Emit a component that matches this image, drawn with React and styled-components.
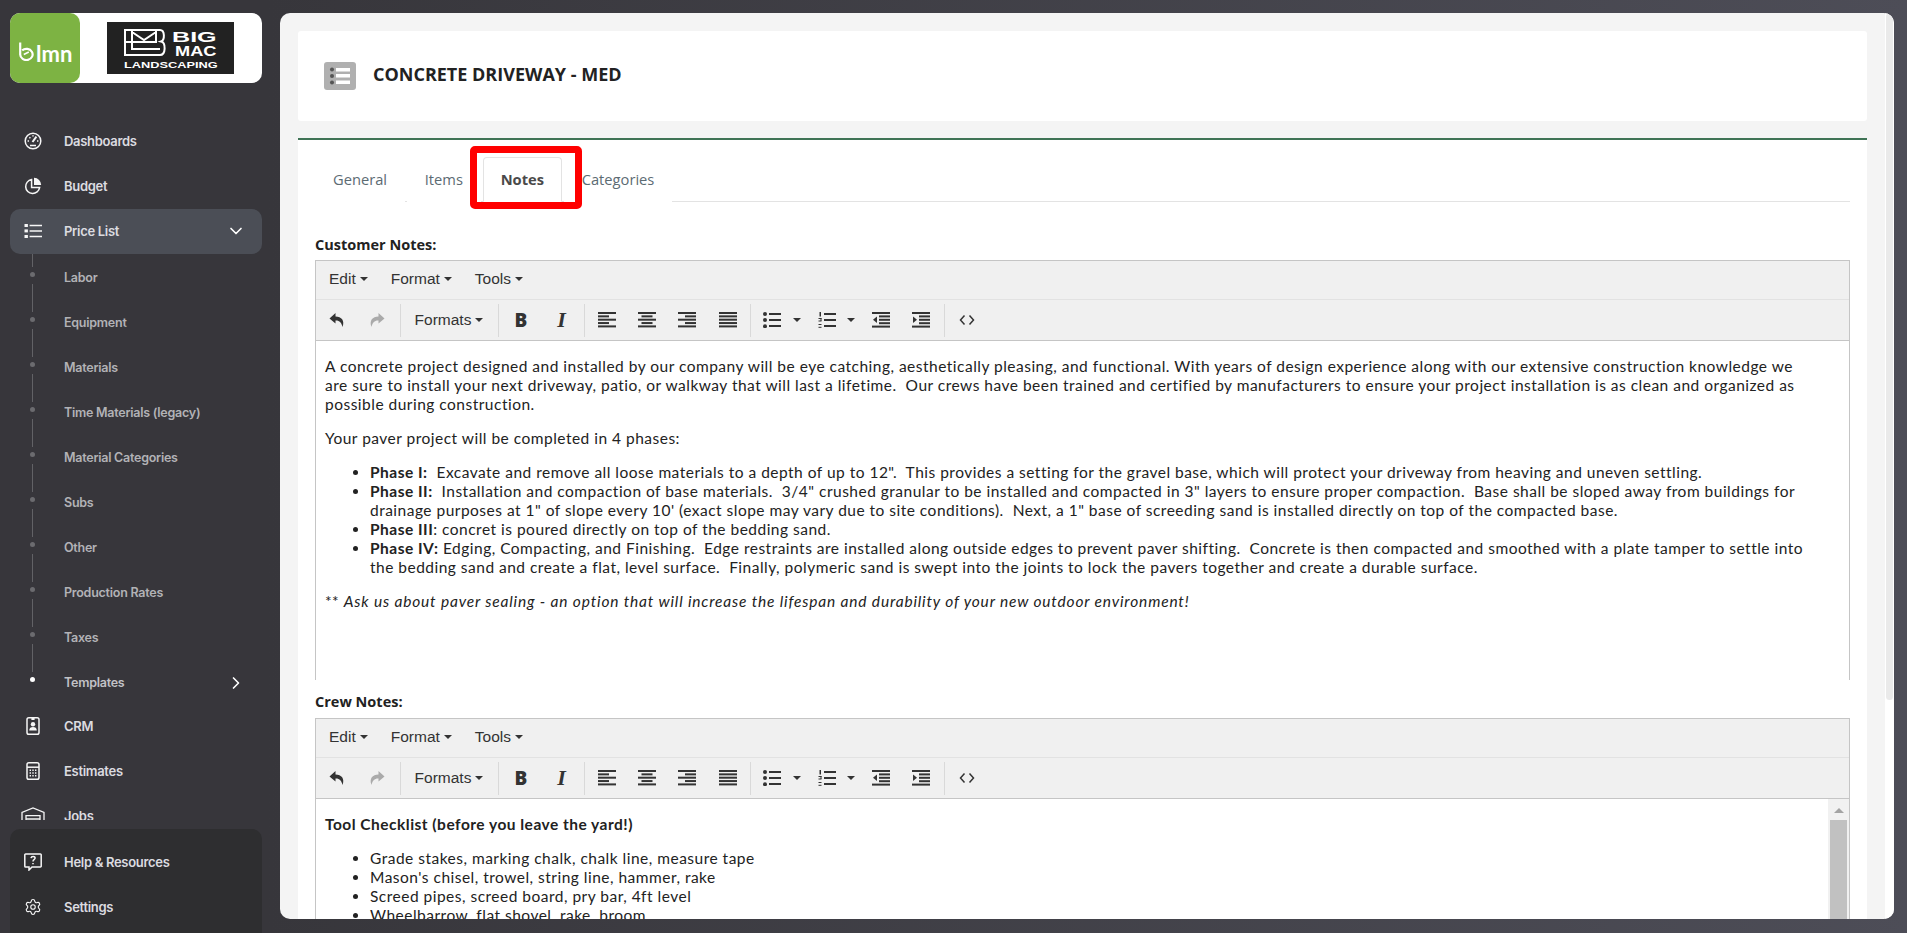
import React from 'react';
import styled, {createGlobalStyle} from 'styled-components';
import {ChevronDown, ChevronRight, Settings as SettingsIcon} from 'lucide-react';

const GlobalStyle = createGlobalStyle`
	html, body {
		margin: 0;
		padding: 0;
		height: 100%;
		overflow: hidden;
		font-family: 'Open Sans', sans-serif;
	}
	* { box-sizing: border-box; }
`

const Shell = styled.div`
	display: flex;
	height: 100vh;
	background: linear-gradient(to right, #37363b 0%, #37363b 14%, #4d4d57 100%);
`

/* sidebar */
const Sidebar = styled.aside`
	width: 280px;
	flex: none;
	display: flex;
	flex-direction: column;
	padding: 13px 18px 0 10px;
	font-family: 'Inter', sans-serif;
`
const LogoBox = styled.div`
	flex: none;
	height: 70px;
	background: #fff;
	border-radius: 10px;
	display: flex;
	align-items: center;
`
const GreenLogo = styled.div`
	width: 70px;
	height: 70px;
	background: #7db343;
	border-radius: 10px;
	display: flex;
	align-items: flex-end;
	gap: 2px;
	padding: 0 0 22px 9px;
	color: #fff;
	font-family: 'Lato', sans-serif;
	font-weight: 700;
	font-size: 22px;
	line-height: 22px;
`
const LmnText = styled.span`
	position: relative;
	top: 4px;
`
const BrandLogo = styled.div`
	width: 127px;
	height: 52px;
	margin-left: 27px;
	background: #222;
	padding: 7px 0 0 17px;
	color: #fff;
	font-family: 'Liberation Sans', sans-serif;
	font-weight: 700;
`
const BrandTop = styled.div`
	display: flex;
	gap: 5px;
	height: 31px;
`
const BrandWords = styled.div`
	display: flex;
	flex-direction: column;
	width: 45px;
`
const BrandBig = styled.span`
	font-size: 15.5px;
	line-height: 15px;
	transform: scaleX(1.62);
	transform-origin: left;
	white-space: nowrap;
`
const BrandMac = styled.span`
	font-size: 14px;
	line-height: 14px;
	margin-left: 3px;
	transform: scaleX(1.3);
	transform-origin: left;
	white-space: nowrap;
`
const BrandBottom = styled.div`
	font-size: 9px;
	line-height: 10px;
	transform: scaleX(1.42);
	transform-origin: left;
	white-space: nowrap;
`
const Nav = styled.nav`
	flex: 1;
	min-height: 0;
	overflow: hidden;
	margin-top: 36px;
`
const NavRow = styled.div`
	position: relative;
	z-index: 1;
	height: 45px;
	display: flex;
	align-items: center;
	padding: 0 16px 1px 0;
	border-radius: 10px;
	background: ${p => p.$active ? '#4b4e56' : 'transparent'};
	color: #dcdce0;
	font-size: 13px;
	font-weight: 600;
	letter-spacing: -0.3px;
`
const NavIcon = styled.span`
	width: 46px;
	margin-left: 8px;
	display: flex;
	justify-content: flex-start;
	padding-left: ${p => p.$wide ? 3 : 6}px;
	color: #f6f6f6;
`
const NavLabel = styled.span`
	flex: 1;
`
const SubRow = styled.div`
	position: relative;
	height: 45px;
	display: flex;
	align-items: center;
	padding: 2px 16px 0 54px;
	color: ${p => p.$current ? '#c2c2c6' : '#b2b2b6'};
	font-size: 12.5px;
	font-weight: 600;
	letter-spacing: -0.25px;
	&::before {
		content: '';
		position: absolute;
		left: 22px;
		top: -15px;
		height: 28px;
		width: 1px;
		background: #626266;
	}
	&::after {
		content: '';
		position: absolute;
		left: 20px;
		top: 18px;
		width: 5px;
		height: 5px;
		border-radius: 50%;
		background: ${p => p.$current ? '#fff' : '#6b6b6f'};
	}
`
const SideFooter = styled.div`
	flex: none;
	height: 104px;
	margin-top: 9px;
	padding-top: 11px;
	background: #2e2e30;
	border-radius: 10px 10px 0 0;
`

/* main panel */
const Main = styled.main`
	flex: 1;
	min-width: 0;
	margin: 13px 13px 14px 0;
	background: #f4f4f4;
	border-radius: 10px;
	overflow: hidden;
	display: flex;
`
const Pane = styled.div`
	flex: 1;
	min-width: 0;
	padding: 18px 18px 0 18px;
	overflow: hidden;
`
const Rail = styled.div`
	width: 9px;
	flex: none;
	background: #fff;
`
const RailThumb = styled.div`
	width: 7px;
	height: 687px;
	margin-left: 1px;
	background: #eaeaea;
	border-radius: 4px;
`
const HeaderCard = styled.div`
	height: 90px;
	background: #fff;
	border-radius: 3px;
	display: flex;
	align-items: center;
	gap: 17px;
	padding-left: 26px;
	margin-bottom: 17px;
`
const Title = styled.h1`
	margin: 0 0 4px;
	font-size: 18px;
	line-height: 24px;
	font-weight: 700;
	color: #222;
	text-transform: uppercase;
`
const DetailCard = styled.div`
	background: #fff;
	border-top: 2px solid #3f7355;
	padding: 17px 17px 0;
	min-height: 800px;
`
const Tabs = styled.div`
	position: relative;
	display: flex;
	height: 45px;
	border-bottom: 1px solid #e3e3e3;
	margin-bottom: 33px;
`
const Tab = styled.div`
	height: 45px;
	padding: 0 17px 2px;
	margin-right: 1.7px;
	display: flex;
	align-items: center;
	font-size: 14.7px;
	font-weight: ${p => p.$active ? 700 : 400};
	color: ${p => p.$active ? '#4a4a4a' : '#5c6b73'};
	border: 1px solid ${p => p.$active ? '#e3e3e3' : 'transparent'};
	border-bottom-color: ${p => p.$active ? '#fff' : 'transparent'};
	border-radius: 4px 4px 0 0;
	background: #fff;
`
const RedMark = styled.div`
	position: absolute;
	left: 155px;
	top: -11px;
	width: 112px;
	height: 63px;
	border: 7px solid #f00;
	border-radius: 5px;
`
const FieldLabel = styled.div`
	font-size: 14.5px;
	font-weight: 700;
	line-height: 20px;
	color: #222;
	margin-top: ${p => p.$top || 0}px;
	margin-bottom: ${p => p.$bottom || 5}px;
`
const Editor = styled.div`
	border: 1px solid #c5c5c5;
	border-bottom: none;
`
const MenuBar = styled.div`
	height: 39px;
	background: #f0f0f0;
	border-bottom: 1px solid #e2e2e2;
	display: flex;
	align-items: center;
	padding: 0 0 2px 13px;
	gap: 23px;
	font-family: 'Liberation Sans', sans-serif;
	font-size: 15.5px;
	color: #333;
`
const MenuItem = styled.span`
	display: flex;
	align-items: center;
	gap: 4px;
`
const Caret = styled.i`
	display: inline-block;
	width: 0;
	height: 0;
	border-left: 4px solid transparent;
	border-right: 4px solid transparent;
	border-top: 4px solid #333;
`
const ToolBar = styled.div`
	height: 41px;
	background: #f0f0f0;
	border-bottom: 1px solid #c5c5c5;
	display: flex;
	align-items: center;
	padding-left: 1px;
	color: #333;
`
const ToolBtn = styled.div`
	width: ${p => p.$w || 40}px;
	height: 30px;
	flex: none;
	display: flex;
	align-items: center;
	justify-content: center;
	gap: ${p => p.$gap || 0}px;
`
const FormatsBtn = styled(ToolBtn)`
	font-family: 'Liberation Sans', sans-serif;
	font-size: 15.5px;
	gap: 4px;
`
const BoldBtn = styled(ToolBtn)`
	font-family: 'Open Sans', sans-serif;
	font-weight: 800;
	font-size: 19px;
`
const ItalicBtn = styled(ToolBtn)`
	font-family: 'Liberation Serif', serif;
	font-style: italic;
	font-weight: 700;
	font-size: 22px;
`
const Sep = styled.span`
	width: 1px;
	height: 33px;
	flex: none;
	margin: 0 ${p => p.$r ?? 2}px 0 ${p => p.$l ?? 2}px;
	background: #d9d9d9;
`
const EditorBody = styled.div`
	height: ${p => p.$h}px;
	overflow: hidden;
	display: flex;
	background: #fff;
`
const Content = styled.div`
	flex: 1;
	min-width: 0;
	padding: 2px 9px 0;
	font-family: 'Lato', sans-serif;
	font-size: 15.5px;
	line-height: 19px;
	letter-spacing: 0.49px;
	color: #222;
	white-space: pre;
	p { margin: 14px 0 15px; }
	ul { margin: 15px 0; padding-left: 45px; }
	em { letter-spacing: 0.83px; }
`
const ScrollTrack = styled.div`
	width: 21px;
	flex: none;
	background: #f1f1f1;
	display: flex;
	flex-direction: column;
	align-items: center;
	padding-top: 9px;
`
const ScrollArrow = styled.i`
	width: 0;
	height: 0;
	border-left: 5px solid transparent;
	border-right: 5px solid transparent;
	border-bottom: 5px solid #a3a3a3;
	margin-bottom: 7px;
`
const ScrollThumb = styled.div`
	width: 17px;
	flex: 1;
	background: #c1c1c1;
`

/* drawn icons */
const Svg = ({size = 18, children, ...rest}) => (
	<svg width={size} height={size} viewBox="0 0 18 18" fill="none" stroke="currentColor" strokeWidth="1.5" {...rest}>{children}</svg>
)
const GaugeIcon = () => (
	<Svg>
		<circle cx="9" cy="9" r="7.8" />
		<path d="M8.500 10 L12.400 4.600" strokeWidth="2" />
		<path d="M3.600 9h1.400M5.400 5.200l1 1M9 3.200v1.400M14.400 9h-1.400M6 13.600h6" />
	</Svg>
)
const PieIcon = () => (
	<Svg>
		<path d="M7.600 2.600 A7 7 0 1 0 15.600 10.600 H7.600 Z" />
		<path d="M10 0.800 A7.200 7.200 0 0 1 17.200 8 H10 Z" fill="currentColor" stroke="none" />
	</Svg>
)
const ListIcon = () => (
	<Svg>
		<rect x="0.500" y="2" width="3.400" height="3" fill="currentColor" stroke="none" />
		<rect x="0.500" y="7.400" width="3.400" height="3" fill="currentColor" stroke="none" />
		<rect x="0.500" y="13" width="3.400" height="3" fill="currentColor" stroke="none" />
		<path d="M5.600 3.400H18M5.600 9H18M5.600 14.600H18" />
	</Svg>
)
const BadgeIcon = () => (
	<Svg>
		<rect x="3" y="0.800" width="12" height="16.400" rx="1.800" />
		<path d="M7.400 0.800h3.200v2.200H7.400z" fill="currentColor" stroke="none" />
		<circle cx="9" cy="7.200" r="2.200" fill="currentColor" stroke="none" />
		<path d="M5.200 13.600c0-2.600 1.700-3.600 3.800-3.600s3.800 1 3.800 3.600z" fill="currentColor" stroke="none" />
	</Svg>
)
const CalcIcon = () => (
	<Svg>
		<rect x="3" y="0.800" width="12" height="16.400" rx="1.800" />
		<path d="M3 5.200h12" />
		<path d="M5.600 8.200h1.400M8.300 8.200h1.400M11 8.200h1.400M5.600 11h1.400M8.300 11h1.400M11 11h1.400M5.600 13.800h1.400M8.300 13.800h1.400M11 13.800h1.400" strokeWidth="1.600" />
	</Svg>
)
const GarageIcon = () => (
	<svg width="24" height="18" viewBox="0 0 24 18" fill="none" stroke="currentColor" strokeWidth="1.300">
		<path d="M1 18V5.400L12 1l11 4.400V18" />
		<path d="M5 18V8.600h14V18M5 12h14M5 15h14" />
	</svg>
)
const HelpIcon = () => (
	<Svg>
		<path d="M1.600 1h14.800a.8.8 0 0 1 .8.8v11.400a.8.8 0 0 1-.8.8H8l-3 3v-3H1.600a.8.8 0 0 1-.8-.8V1.800a.8.8 0 0 1 .8-.8z" />
		<path d="M7 5.200c.2-1.300 1-1.800 2.100-1.800 1.200 0 2 .7 2 1.700 0 1.600-2.100 1.500-2.100 3.300M9 10v1.300" />
	</Svg>
)
const Tool = ({d, fill = '#333'}) => (
	<svg width="16" height="16" viewBox="0 0 16 16" fill={fill}><path d={d} /></svg>
)
const UNDO = 'M6.500 1 L0.500 6.500 L6.500 11.500 V8.400 C10.500 8.200 12.500 10.500 13.500 15 C16 8.500 12.500 4.400 6.500 4.400 Z'
const REDO = 'M9.500 1 L15.500 6.500 L9.500 11.500 V8.400 C5.500 8.200 3.500 10.500 2.500 15 C0 8.500 3.500 4.400 9.500 4.400 Z'
const rows = list => (
	<svg width="18" height="16" viewBox="0 0 18 16" fill="#333">
		{list.map(([x, w], i) => <rect key={i} x={x} y={i * 3.35} width={w} height="2" />)}
	</svg>
)
const BulletIcon = () => (
	<svg width="18" height="16" viewBox="0 0 18 16" fill="#333">
		<circle cx="2" cy="2" r="2" /><circle cx="2" cy="8" r="2" /><circle cx="2" cy="14.200" r="2" />
		<rect x="6" y="1" width="12" height="2" /><rect x="6" y="7" width="12" height="2" /><rect x="6" y="13" width="12" height="2" />
	</svg>
)
const NumberIcon = () => (
	<svg width="18" height="16" viewBox="0 0 18 16" fill="#333">
		<rect x="1.500" y="0" width="1.500" height="4.500" /><rect x="0.500" y="6" width="3" height="1" /><rect x="2.500" y="6" width="1" height="3" /><rect x="0.500" y="8.500" width="3" height="1" /><rect x="0.500" y="12" width="3" height="1" /><rect x="0.500" y="14.800" width="3" height="1" />
		<rect x="6" y="1" width="12" height="2" /><rect x="6" y="7" width="12" height="2" /><rect x="6" y="13" width="12" height="2" />
	</svg>
)
const IndentIcon = ({out}) => (
	<svg width="18" height="16" viewBox="0 0 18 16" fill="#333">
		<rect x="0" y="0" width="18" height="2" /><rect x="7" y="3.400" width="11" height="2" /><rect x="7" y="6.800" width="11" height="2" /><rect x="7" y="10.200" width="11" height="2" /><rect x="0" y="13.600" width="18" height="2" />
		<path d={out ? 'M5 4.500v6.500L1 7.800z' : 'M1 4.500v6.500l4-3.200z'} />
	</svg>
)
const CodeIcon = () => (
	<svg width="16" height="16" viewBox="0 0 16 16" fill="none" stroke="#333" strokeWidth="1.500"><path d="M5.500 3.500 1.500 8l4 4.500M10.500 3.500l4 4.500-4 4.500" /></svg>
)

const NAV_TOP = [['Dashboards', <GaugeIcon />], ['Budget', <PieIcon />]]
const NAV_SUB = ['Labor', 'Equipment', 'Materials', 'Time Materials (legacy)', 'Material Categories', 'Subs', 'Other', 'Production Rates', 'Taxes']
const NAV_BOTTOM = [['CRM', <BadgeIcon />], ['Estimates', <CalcIcon />]]

const EditorChrome = () => (
	<>
		<MenuBar>
			{['Edit', 'Format', 'Tools'].map(m => <MenuItem key={m}>{m}<Caret /></MenuItem>)}
		</MenuBar>
		<ToolBar>
			<ToolBtn><Tool d={UNDO} /></ToolBtn>
			<ToolBtn><Tool d={REDO} fill="#aaa" /></ToolBtn>
			<Sep $l={3} $r={0} />
			<FormatsBtn $w={96}>Formats<Caret /></FormatsBtn>
			<Sep $l={1} $r={2} />
			<BoldBtn>B</BoldBtn>
			<ItalicBtn $w={41}>I</ItalicBtn>
			<Sep $l={2} $r={2} />
			<ToolBtn>{rows([[0, 18], [0, 11], [0, 18], [0, 11], [0, 18]])}</ToolBtn>
			<ToolBtn>{rows([[0, 18], [3.5, 11], [0, 18], [3.5, 11], [0, 18]])}</ToolBtn>
			<ToolBtn>{rows([[0, 18], [7, 11], [0, 18], [7, 11], [0, 18]])}</ToolBtn>
			<ToolBtn $w={41}>{rows([[0, 18], [0, 18], [0, 18], [0, 18], [0, 18]])}</ToolBtn>
			<Sep $l={2} $r={1} />
			<ToolBtn $w={60} $gap={12}><BulletIcon /><Caret /></ToolBtn>
			<ToolBtn $w={48} $gap={11}><NumberIcon /><Caret /></ToolBtn>
			<ToolBtn $w={41}><IndentIcon out /></ToolBtn>
			<ToolBtn><IndentIcon /></ToolBtn>
			<Sep $l={3} $r={2} />
			<ToolBtn><CodeIcon /></ToolBtn>
		</ToolBar>
	</>
)

const App = () => {
	return(
		<Shell>
			<GlobalStyle />
			<Sidebar>
				<LogoBox>
					<GreenLogo>
						<svg width="15" height="19" viewBox="0 0 15 19" fill="none" stroke="#fff" strokeWidth="2.200">
							<path d="M1.200 0.500v12a6.200 5.600 0 1 0 2-4.200" />
							<path d="M4.800 12.500 9.800 10" strokeWidth="1.500" />
						</svg>
						<LmnText>lmn</LmnText>
					</GreenLogo>
					<BrandLogo>
						<BrandTop>
							<svg width="43" height="27" viewBox="0 0 43 27" fill="none" stroke="#fff" strokeWidth="2">
								<path d="M1 1H36c5 0 5 10 1 11.500 5 1 5 13.500-1 13.500H1ZM1 13H33M8 1V13M8 3 20 11 32 3M32 1V13M8 13V20H36" />
							</svg>
							<BrandWords><BrandBig>BIG</BrandBig><BrandMac>MAC</BrandMac></BrandWords>
						</BrandTop>
						<BrandBottom>LANDSCAPING</BrandBottom>
					</BrandLogo>
				</LogoBox>
				<Nav>
					{NAV_TOP.map(([label, icon]) => (
						<NavRow key={label}><NavIcon>{icon}</NavIcon><NavLabel>{label}</NavLabel></NavRow>
					))}
					<NavRow $active><NavIcon><ListIcon /></NavIcon><NavLabel>Price List</NavLabel><ChevronDown size={20} color="#fff" /></NavRow>
					{NAV_SUB.map(label => <SubRow key={label}>{label}</SubRow>)}
					<SubRow $current><NavLabel>Templates</NavLabel><ChevronRight size={20} color="#fff" /></SubRow>
					{NAV_BOTTOM.map(([label, icon]) => (
						<NavRow key={label}><NavIcon>{icon}</NavIcon><NavLabel>{label}</NavLabel></NavRow>
					))}
					<NavRow><NavIcon $wide><GarageIcon /></NavIcon><NavLabel>Jobs</NavLabel></NavRow>
				</Nav>
				<SideFooter>
					<NavRow><NavIcon><HelpIcon /></NavIcon><NavLabel>Help &amp; Resources</NavLabel></NavRow>
					<NavRow><NavIcon><SettingsIcon size={18} strokeWidth={1.500} /></NavIcon><NavLabel>Settings</NavLabel></NavRow>
				</SideFooter>
			</Sidebar>
			<Main>
				<Pane>
					<HeaderCard>
						<svg width="32" height="28" viewBox="0 0 32 28">
							<rect width="32" height="28" rx="3" fill="#b0b0b0" />
							<circle cx="8" cy="7.500" r="2" fill="#555" /><circle cx="8" cy="14" r="2" fill="#555" /><circle cx="8" cy="20.500" r="2" fill="#555" />
							<rect x="12" y="6" width="14" height="3.500" fill="#fff" /><rect x="12" y="12" width="14" height="3.500" fill="#fff" /><rect x="12" y="18.500" width="14" height="3.500" fill="#fff" />
						</svg>
						<Title>Concrete Driveway - MED</Title>
					</HeaderCard>
					<DetailCard>
						<Tabs>
							<Tab>General</Tab>
							<Tab>Items</Tab>
							<Tab $active>Notes</Tab>
							<Tab>Categories</Tab>
							<RedMark />
						</Tabs>
						<FieldLabel>Customer Notes:</FieldLabel>
						<Editor>
							<EditorChrome />
							<EditorBody $h={339}>
								<Content>
									<p>A concrete project designed and installed by our company will be eye catching, aesthetically pleasing, and functional. With years of design experience along with our extensive construction knowledge we<br />are sure to install your next driveway, patio, or walkway that will last a lifetime.  Our crews have been trained and certified by manufacturers to ensure your project installation is as clean and organized as<br />possible during construction.</p>
									<p>Your paver project will be completed in 4 phases:</p>
									<ul>
										<li><strong>Phase I:</strong>  Excavate and remove all loose materials to a depth of up to 12".  This provides a setting for the gravel base, which will protect your driveway from heaving and uneven settling.</li>
										<li><strong>Phase II:</strong>  Installation and compaction of base materials.  3/4" crushed granular to be installed and compacted in 3" layers to ensure proper compaction.  Base shall be sloped away from buildings for<br />drainage purposes at 1" of slope every 10' (exact slope may vary due to site conditions).  Next, a 1" base of screeding sand is installed directly on top of the compacted base.</li>
										<li><strong>Phase III</strong>: concret is poured directly on top of the bedding sand.</li>
										<li><strong>Phase IV:</strong> Edging, Compacting, and Finishing.  Edge restraints are installed along outside edges to prevent paver shifting.  Concrete is then compacted and smoothed with a plate tamper to settle into<br />the bedding sand and create a flat, level surface.  Finally, polymeric sand is swept into the joints to lock the pavers together and create a durable surface.</li>
									</ul>
									<p>** <em>Ask us about paver sealing - an option that will increase the lifespan and durability of your new outdoor environment!</em></p>
								</Content>
							</EditorBody>
						</Editor>
						<FieldLabel $top={12} $bottom={6}>Crew Notes:</FieldLabel>
						<Editor>
							<EditorChrome />
							<EditorBody $h={130}>
								<Content>
									<p><strong>Tool Checklist (before you leave the yard!)</strong></p>
									<ul>
										<li>Grade stakes, marking chalk, chalk line, measure tape</li>
										<li>Mason's chisel, trowel, string line, hammer, rake</li>
										<li>Screed pipes, screed board, pry bar, 4ft level</li>
										<li>Wheelbarrow, flat shovel, rake, broom</li>
									</ul>
								</Content>
								<ScrollTrack><ScrollArrow /><ScrollThumb /></ScrollTrack>
							</EditorBody>
						</Editor>
					</DetailCard>
				</Pane>
				<Rail><RailThumb /></Rail>
			</Main>
		</Shell>
	)
}

export default App
